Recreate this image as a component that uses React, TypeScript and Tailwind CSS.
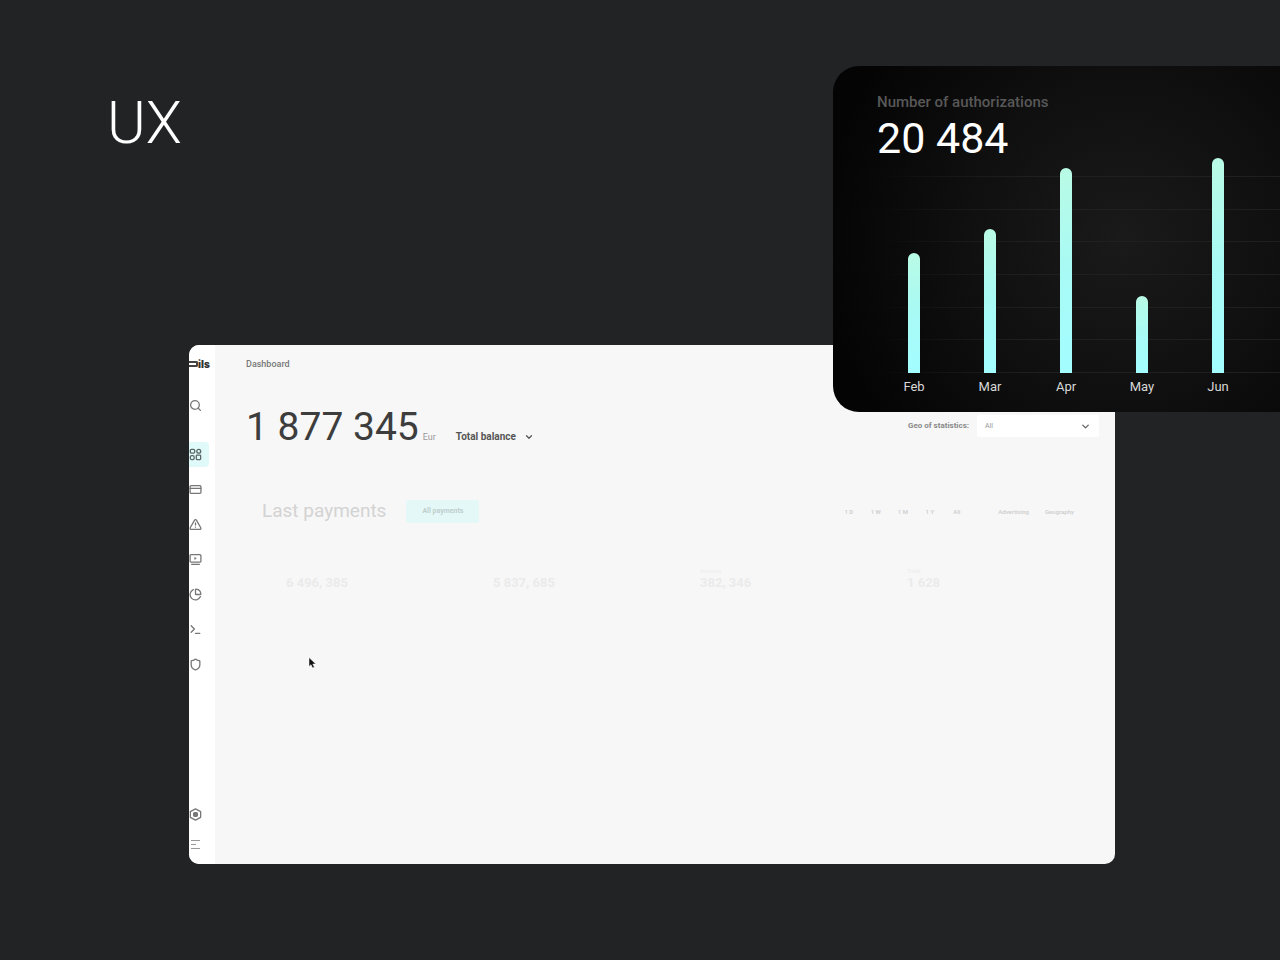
import type { ReactNode } from 'react'
import { ChartPie, ChevronDown, CreditCard, Search, Shield, Terminal, TriangleAlert } from 'lucide-react'

interface NavItem {
  label: string
  icon: ReactNode
  active?: boolean
}

const ICON = { size: 13, strokeWidth: 2.4 }

function TilesIcon() {
  return (
    <svg width="13" height="13" viewBox="0 0 24 24" fill="none" stroke="currentColor" strokeWidth="2.4">
      <rect x="2.5" y="2.5" width="8" height="7" rx="2" />
      <rect x="2.5" y="14" width="7" height="7.5" rx="2.5" />
      <circle cx="18" cy="6" r="3.6" />
      <rect x="13.5" y="13" width="8" height="8.5" rx="1.5" />
    </svg>
  )
}

function ScreenIcon() {
  return (
    <svg width="13" height="13" viewBox="0 0 24 24" fill="none" stroke="currentColor" strokeWidth="2.4">
      <rect x="2" y="3" width="20" height="14" rx="2" />
      <path d="M4 21h16" />
      <path d="M10.500 8v4l3-2z" fill="currentColor" strokeWidth="1" />
    </svg>
  )
}

function SettingsIcon() {
  return (
    <svg width="13" height="13" viewBox="0 0 24 24" fill="none" stroke="currentColor" strokeWidth="2.4">
      <path d="M12 1.500l9.500 5.200v10.600L12 22.500l-9.500-5.200V6.700z" strokeLinejoin="round" />
      <rect x="8.500" y="8.500" width="7" height="7" rx="2" fill="currentColor" />
    </svg>
  )
}

function LinesIcon() {
  return (
    <svg width="13" height="11" viewBox="0 0 13 11" fill="none" stroke="currentColor">
      <path d="M2 1.500h9M2 5.500h5M2 9.500h9" />
    </svg>
  )
}

const NAV: NavItem[] = [
  { label: 'Dashboard', icon: <TilesIcon />, active: true },
  { label: 'Cards', icon: <CreditCard {...ICON} /> },
  { label: 'Alerts', icon: <TriangleAlert {...ICON} /> },
  { label: 'Terminals', icon: <ScreenIcon /> },
  { label: 'Statistics', icon: <ChartPie {...ICON} /> },
  { label: 'Console', icon: <Terminal {...ICON} /> },
  { label: 'Security', icon: <Shield {...ICON} /> },
]

const BARS = [
  { month: 'Feb', value: 120 },
  { month: 'Mar', value: 144 },
  { month: 'Apr', value: 205 },
  { month: 'May', value: 77 },
  { month: 'Jun', value: 215 },
]

const PERIODS = ['1 D', '1 W', '1 M', '1 Y', 'All']

const TOTALS = [
  { label: '', value: '6 496, 385' },
  { label: '', value: '5 837, 685' },
  { label: 'Amount', value: '382, 346' },
  { label: 'Total', value: '1 628' },
]

function Sidebar() {
  return (
    <aside className="flex w-[26px] shrink-0 flex-col overflow-hidden bg-white pb-1 text-[#777777]">
      <div className="flex h-[38px] items-center text-[#333333]">
        <span className="h-[6px] w-[9px] shrink-0 rounded-r-xs border-2 border-l-0 border-[#444444]" />
        <span className="font-[Inter] text-[10px] leading-3 font-black">ils</span>
      </div>
      <button aria-label="Search" className="flex h-11 items-center">
        <Search {...ICON} />
      </button>
      <nav className="mt-[10px] flex flex-col">
        {NAV.map((n) => (
          <button key={n.label} aria-label={n.label} className="flex h-[35px] items-center">
            <span className={`flex h-[25px] w-5 items-center rounded-r ${n.active ? 'bg-[#dffaf9] text-[#5c6868]' : ''}`}>
              {n.icon}
            </span>
          </button>
        ))}
      </nav>
      <button aria-label="Settings" className="mt-auto flex h-[30px] items-center">
        <SettingsIcon />
      </button>
      <button aria-label="Menu" className="flex h-[31px] items-center text-[#999999]">
        <LinesIcon />
      </button>
    </aside>
  )
}

function DashboardWindow() {
  return (
    <main className="mt-48 mr-[165px] ml-[189px] flex flex-1 overflow-hidden rounded-[10px] bg-[#f7f7f7]">
      <Sidebar />
      <div className="min-w-0 flex-1 pr-4 pl-[31px]">
        <h2 className="flex h-10 items-center text-[9px] font-medium text-[#777777]">Dashboard</h2>

        <div className="mt-[18px] flex items-start justify-between">
          <div className="flex items-baseline text-[#3d3d3d]">
            <span className="text-[39px] leading-[48px]">1 877 345</span>
            <span className="ml-1 text-[9px] text-[#999999]">Eur</span>
            <button className="ml-5 flex items-center gap-2 text-[10px] leading-3 font-bold text-[#555555]">
              Total balance
              <ChevronDown size={10} strokeWidth={3} />
            </button>
          </div>
          <div className="mt-3 flex items-center gap-2">
            <label htmlFor="geo" className="text-[8px] leading-3 font-bold text-[#8a8a8a]">
              Geo of statistics:
            </label>
            <div className="relative">
              <select
                id="geo"
                className="block h-[22px] w-[122px] appearance-none rounded-xs bg-white pl-2 text-[7px] text-[#999999]"
              >
                <option>All</option>
              </select>
              <ChevronDown
                size={11}
                strokeWidth={3}
                className="pointer-events-none absolute top-[6px] right-2 text-[#666666]"
              />
            </div>
          </div>
        </div>

        {/* Last payments, still fading in */}
        <section className="mt-12 pr-[25px] pl-4">
          <div className="flex items-center">
            <h3 className="text-[19px] leading-6 text-[#d3d3d3]">Last payments</h3>
            <button className="ml-5 h-[23px] w-[73px] rounded-xs bg-[#e4f8f7] text-[7px] font-bold text-[#bfcfce]">
              All payments
            </button>
            <div className="ml-auto flex items-center text-[6px] font-medium text-[#cccccc]">
              {PERIODS.map((p) => (
                <button key={p} className="w-[27px]">
                  {p}
                </button>
              ))}
              <button className="ml-[28px]">Advertising</button>
              <button className="ml-4">Geography</button>
            </div>
          </div>
          <dl className="mt-11 -mr-10 ml-6 grid grid-cols-4">
            {TOTALS.map((t) => (
              <div key={t.value}>
                <dt className="h-2 text-[6px] leading-2 text-[#ececec]">{t.label}</dt>
                <dd className="text-[13px] leading-4 font-bold text-[#ebebeb]">{t.value}</dd>
              </div>
            ))}
          </dl>
        </section>
      </div>
    </main>
  )
}

function AuthorizationsCard() {
  return (
    <section className="absolute top-[66px] right-0 w-[447px] overflow-hidden rounded-l-[26px] bg-[radial-gradient(circle_at_65%_50%,#1a1a1a_0%,#101010_45%,#040404_90%)] pt-[26px] pb-[15px] pl-11">
      <h2 className="text-[15px] leading-5 font-medium text-[#585858]">Number of authorizations</h2>
      <p className="mt-1 text-[43px] leading-[44px] text-white">20 484</p>
      <div className="relative -mt-[2px] -ml-px flex h-[215px] items-end">
        <div className="absolute inset-x-0 bottom-0 flex h-[197px] flex-col justify-between">
          {[0, 1, 2, 3, 4, 5, 6].map((i) => (
            <div key={i} className="h-px bg-linear-to-r from-transparent via-[#202020] via-40% to-[#1f1f1f]" />
          ))}
        </div>
        {BARS.map((b) => (
          <div key={b.month} className="relative flex w-[76px] justify-center">
            <div
              className="w-3 rounded-t-full bg-linear-to-t from-[#a3fdff] via-[#a8faf5] to-[#b9fbe5]"
              style={{ height: b.value }}
            />
          </div>
        ))}
      </div>
      <div className="mt-1 -ml-px flex text-[13px] leading-5 text-[#d8d8d8]">
        {BARS.map((b) => (
          <span key={b.month} className="w-[76px] text-center">
            {b.month}
          </span>
        ))}
      </div>
    </section>
  )
}

export default function App() {
  return (
    <div className="relative flex min-h-screen flex-col overflow-hidden bg-[#222325] pt-[93px] pb-24 font-[Roboto,sans-serif]">
      <h1 className="ml-[107px] text-[59px] leading-[60px] font-light text-white">UX</h1>
      <DashboardWindow />
      <AuthorizationsCard />
      {/* Pointer */}
      <svg className="absolute top-[657px] left-[308px]" width="9" height="12" viewBox="0 0 9 12">
        <path d="M1 0.500v9l2-1.800 1.600 3.300 1.800-.8-1.600-3.200h3z" fill="#111111" stroke="#ffffff" strokeWidth="0.500" />
      </svg>
    </div>
  )
}
